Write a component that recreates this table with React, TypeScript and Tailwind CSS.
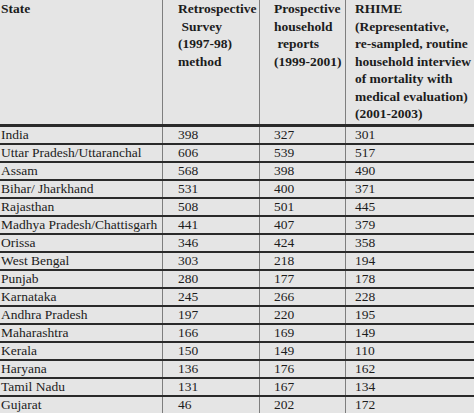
const rows: [string, string, string, string][] = [
  ['India', '398', '327', '301'],
  ['Uttar Pradesh/Uttaranchal', '606', '539', '517'],
  ['Assam', '568', '398', '490'],
  ['Bihar/ Jharkhand', '531', '400', '371'],
  ['Rajasthan', '508', '501', '445'],
  ['Madhya Pradesh/Chattisgarh', '441', '407', '379'],
  ['Orissa', '346', '424', '358'],
  ['West Bengal', '303', '218', '194'],
  ['Punjab', '280', '177', '178'],
  ['Karnataka', '245', '266', '228'],
  ['Andhra Pradesh', '197', '220', '195'],
  ['Maharashtra', '166', '169', '149'],
  ['Kerala', '150', '149', '110'],
  ['Haryana', '136', '176', '162'],
  ['Tamil Nadu', '131', '167', '134'],
  ['Gujarat', '46', '202', '172'],
];

const cols = 'grid grid-cols-[163px_97px_86px_1fr]';

const App = () => {
  return (
    <div
      className="w-[474px] h-[413px] overflow-hidden bg-[#e5e5e5] text-[#1c1c1c] text-[13.5px]"
      style={{ fontFamily: '"Liberation Serif", "Times New Roman", serif' }}
    >
      <div className="w-[530px]">
        {/* header */}
        <div className={`${cols} h-[127px] font-bold leading-[17.5px] border-b-[3px] border-[#2a2a2a] whitespace-pre`}>
          <div className="pl-px border-r border-[#7e7e7e]">State</div>
          <div className="pl-[15px] border-r border-[#7e7e7e]">
            {'Retrospective\n Survey\n(1997-98)\nmethod'}
          </div>
          <div className="pl-[14px] border-r border-[#7e7e7e]">
            {'Prospective\nhousehold\n reports\n(1999-2001)'}
          </div>
          <div className="pl-[9px]">
            {'RHIME\n(Representative,\nre-sampled, routine\nhousehold interview\nof mortality with\nmedical evaluation)\n(2001-2003)'}
          </div>
        </div>

        {/* body */}
        {rows.map(([state, a, b, c]) => (
          <div key={state} className={`${cols} h-[18px] border-b-2 border-[#2a2a2a] leading-[16px]`}>
            <div className="pl-px whitespace-nowrap border-r border-[#7e7e7e]">{state}</div>
            <div className="pl-[15px] border-r border-[#7e7e7e]">{a}</div>
            <div className="pl-[14px] border-r border-[#7e7e7e]">{b}</div>
            <div className="pl-[9px]">{c}</div>
          </div>
        ))}
      </div>
    </div>
  );
};

export default App;
